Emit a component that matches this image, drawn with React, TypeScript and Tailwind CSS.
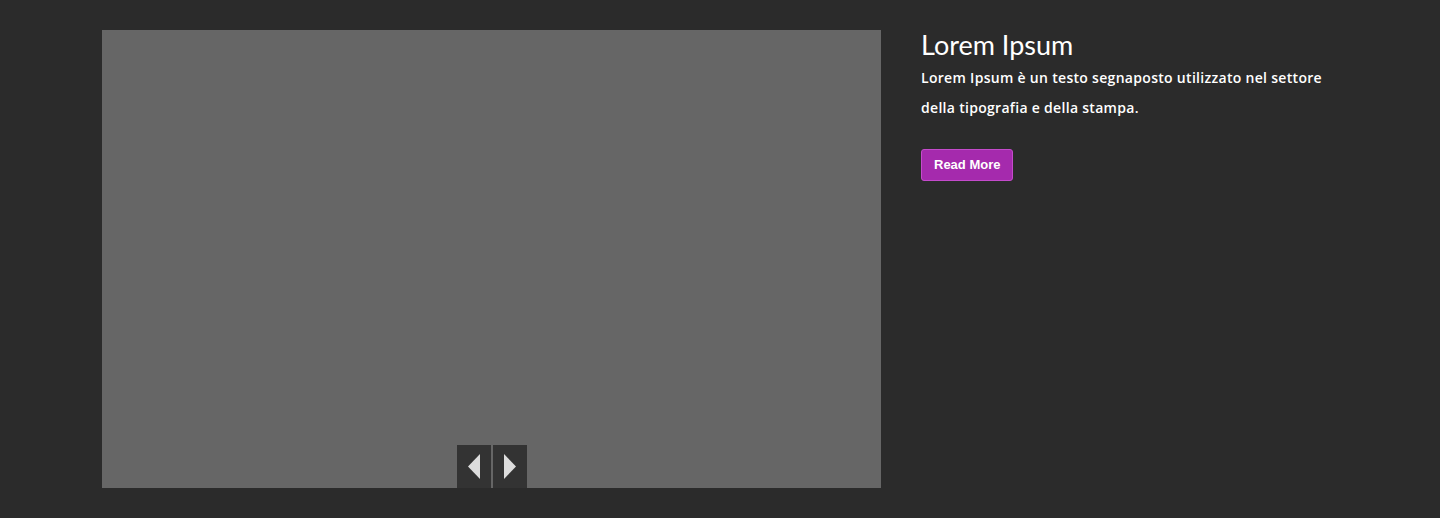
import { useState } from 'react';

const slides = [
  { title: 'Lorem Ipsum', text: 'Lorem Ipsum è un testo segnaposto utilizzato nel settore della tipografia e della stampa.' },
];

export default function App() {
  const [index, setIndex] = useState(0);
  const slide = slides[index];

  const prev = () => setIndex((i) => (i - 1 + slides.length) % slides.length);
  const next = () => setIndex((i) => (i + 1) % slides.length);

  return (
    <div className="min-h-[518px] bg-[#2b2b2b] py-[30px] font-['Lato',sans-serif]">
      <div className="mx-auto flex w-[1236px]">
        {/* Slide image */}
        <div className="flex h-[458px] w-[779px] shrink-0 items-end justify-center bg-[#666666]">
          <div className="flex gap-[2px]">
            <button onClick={prev} className="flex h-[43px] w-[34px] items-center justify-center bg-[#333333]">
              <svg width="12" height="25" viewBox="0 0 12 25">
                <path d="M12 0 L0 12.5 L12 25 Z" fill="#dddddd" />
              </svg>
            </button>
            <button onClick={next} className="flex h-[43px] w-[34px] items-center justify-center bg-[#333333]">
              <svg width="12" height="25" viewBox="0 0 12 25">
                <path d="M0 0 L12 12.5 L0 25 Z" fill="#dddddd" />
              </svg>
            </button>
          </div>
        </div>

        {/* Caption */}
        <div className="pl-10 text-white">
          <h2 className="text-[27px] leading-[30px] font-normal">{slide.title}</h2>
          <p className="mt-[3px] w-[410px] font-['Open_Sans',sans-serif] text-[14px] leading-[30px] font-semibold tracking-[0.3px]">{slide.text}</p>
          <button className="mt-[26px] rounded-[3px] border border-[#c44bcb] bg-[#a52aad] px-[12px] py-[7px] font-['Liberation_Sans',sans-serif] text-[13px] leading-[16px] font-bold text-white">
            Read More
          </button>
        </div>
      </div>
    </div>
  );
}
